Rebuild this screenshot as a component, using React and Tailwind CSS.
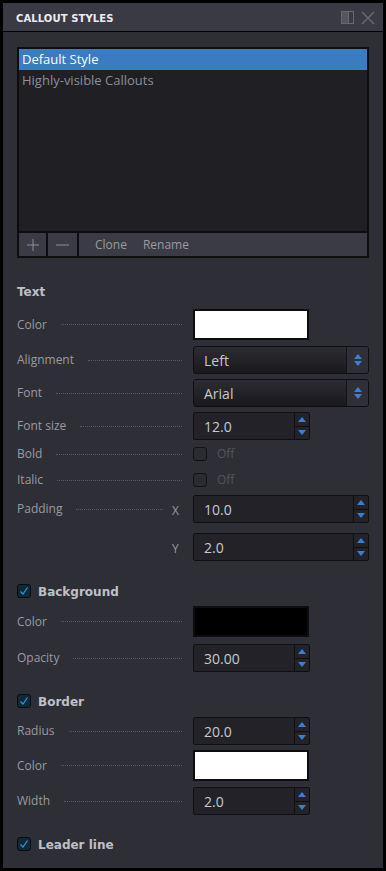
import React from "react";

const F = { fontFamily: '"Open Sans", "Noto Sans", sans-serif' };
const B = { fontFamily: '"DejaVu Sans", "Verdana", sans-serif' };

function Up() {
  return (
    <svg width="8" height="5" viewBox="0 0 8 5"><path d="M0 5 L4 0 L8 5 Z" fill="#3c7fd0" /></svg>
  );
}
function Down() {
  return (
    <svg width="8" height="5" viewBox="0 0 8 5"><path d="M0 0 L4 5 L8 0 Z" fill="#3c7fd0" /></svg>
  );
}

function Label({ text, dotsEnd = 0 }) {
  return (
    <div className="w-[165px] flex items-center shrink-0">
      <span className="text-[12px] text-[#9a9aa2] leading-none" style={F}>{text}</span>
      <div className="flex-1 ml-[14px] border-t border-dotted border-[#5a5a62]" style={{ marginRight: dotsEnd }} />
    </div>
  );
}

function Row({ children, className = "" }) {
  return <div className={"flex items-center pl-[14px] " + className}>{children}</div>;
}

function Swatch({ color }) {
  return <div className={"w-[116px] h-[31px] border-2 border-[#0d0d10] " + color} />;
}

function Select({ value }) {
  return (
    <div className="w-[176px] h-[28px] flex rounded-[3px] border border-[#0f0f12] overflow-hidden bg-gradient-to-b from-[#2c2c33] to-[#19191d]">
      <div className="flex-1 flex items-center pl-[10px] text-[14px] text-[#c8c8d0]" style={F}>{value}</div>
      <div className="w-[22px] border-l border-[#141417] bg-[#2e2f37] flex flex-col items-center justify-center gap-[2px]">
        <Up />
        <Down />
      </div>
    </div>
  );
}

function Spinner({ value, wide }) {
  return (
    <div className={(wide ? "w-[176px]" : "w-[117px]") + " h-[28px] flex rounded-[2px] border border-[#0f0f12] bg-[#222228]"}>
      <div className="flex-1 flex items-center pl-[10px] text-[14px] text-[#c8c8d0]" style={F}>{value}</div>
      <div className="w-[15px] border-l border-[#0f0f12] flex flex-col">
        <div className="flex-1 flex items-center justify-center border-b border-[#0f0f12]"><Up /></div>
        <div className="flex-1 flex items-center justify-center"><Down /></div>
      </div>
    </div>
  );
}

function Check({ checked }) {
  return checked ? (
    <div className="w-[14px] h-[14px] rounded-[3px] border border-[#0a0a0c] bg-[#0e2a3a] flex items-center justify-center">
      <svg width="10" height="10" viewBox="0 0 10 10"><path d="M1.5 5.5 L4 8 L8.5 1.5" fill="none" stroke="#3d8fd6" strokeWidth="1.2" /></svg>
    </div>
  ) : (
    <div className="w-[14px] h-[14px] rounded-[3px] border border-[#111114] bg-[#2a2a31]" />
  );
}

function Toggle() {
  return (
    <div className="flex items-center gap-[10px]">
      <Check />
      <span className="text-[12px] text-[#54545c] leading-none" style={F}>Off</span>
    </div>
  );
}

function Heading({ text, check, className = "" }) {
  return (
    <div className={"h-[20px] flex items-center pl-[14px] " + className}>
      {check && <div className="mr-[7px]"><Check checked /></div>}
      <span className="text-[12px] font-bold text-[#bfc0c8] leading-none mt-[1px]" style={B}>{text}</span>
    </div>
  );
}

const gap = "ml-[11px]";

export default function App() {
  return (
    <div className="w-[386px] h-[871px] border-[3px] border-black bg-[#2e2e36] flex flex-col overflow-hidden">
      <div className="h-[29px] shrink-0 bg-[#393a43] border-b border-black flex items-center pl-[13px] pr-[8px]">
        <span className="text-[10px] font-bold text-[#ececf0] tracking-[0.1px] mt-[2px]" style={B}>CALLOUT STYLES</span>
        <div className="flex-1" />
        <svg width="13" height="13" viewBox="0 0 13 13" className="mt-[1px]">
          <rect x="0.5" y="0.5" width="12" height="12" fill="none" stroke="#686870" />
          <rect x="0.5" y="0.5" width="7" height="12" fill="#55555d" stroke="#686870" />
        </svg>
        <svg width="14" height="14" viewBox="0 0 14 14" className="ml-[7px] mt-[1px]">
          <path d="M1 1 L13 13 M13 1 L1 13" stroke="#6e6e76" strokeWidth="1.3" />
        </svg>
      </div>

      <div className="mx-[14px] mt-[15px] border-2 border-[#0d0d10] flex flex-col shrink-0">
        <div className="h-[182px] bg-[#1f1f24] flex flex-col" style={F}>
          <div className="h-[21px] bg-[#3a7bc1] flex items-center pl-[3px] text-[13px] text-white">Default Style</div>
          <div className="h-[21px] flex items-center pl-[3px] text-[13px] text-[#8e8e96]">Highly-visible Callouts</div>
        </div>
        <div className="h-[25px] border-t-2 border-[#0d0d10] bg-[#3a3b44] flex" style={F}>
          <div className="w-[29px] flex items-center justify-center border-r-2 border-[#0d0d10]">
            <svg width="12" height="12" viewBox="0 0 12 12"><path d="M6 0 V12 M0 6 H12" stroke="#8e8e96" strokeWidth="1" /></svg>
          </div>
          <div className="w-[31px] flex items-center justify-center border-r-2 border-[#0d0d10]">
            <svg width="13" height="12" viewBox="0 0 13 12"><path d="M0 6 H13" stroke="#8e8e96" strokeWidth="1" /></svg>
          </div>
          <div className="flex items-center pl-[16px] gap-[16px] text-[12px] text-[#9a9aa2]">
            <span>Clone</span>
            <span>Rename</span>
          </div>
        </div>
      </div>

      <Heading text="Text" className="mt-[23px]" />
      <Row className="mt-[8px]"><Label text="Color" /><div className={gap}><Swatch color="bg-white" /></div></Row>
      <Row className="mt-[6px]"><Label text="Alignment" /><div className={gap}><Select value="Left" /></div></Row>
      <Row className="mt-[5px]"><Label text="Font" /><div className={gap}><Select value="Arial" /></div></Row>
      <Row className="mt-[5px]"><Label text="Font size" /><div className={gap}><Spinner value="12.0" /></div></Row>
      <Row className="mt-[4px] h-[20px]"><Label text="Bold" /><div className={gap}><Toggle /></div></Row>
      <Row className="mt-[6px] h-[20px]"><Label text="Italic" /><div className={gap}><Toggle /></div></Row>
      <Row className="mt-[5px]">
        <Label text="Padding" dotsEnd={19} />
        <div className={gap + " relative"}>
          <span className="absolute left-[-21px] top-[7px] text-[12px] text-[#9a9aa2]" style={F}>X</span>
          <Spinner value="10.0" wide />
        </div>
      </Row>
      <Row className="mt-[10px]">
        <div className="w-[165px] shrink-0" />
        <div className={gap + " relative"}>
          <span className="absolute left-[-21px] top-[7px] text-[12px] text-[#9a9aa2]" style={F}>Y</span>
          <Spinner value="2.0" wide />
        </div>
      </Row>

      <Heading text="Background" check className="mt-[20px]" />
      <Row className="mt-[5px]"><Label text="Color" /><div className={gap}><Swatch color="bg-black" /></div></Row>
      <Row className="mt-[7px]"><Label text="Opacity" /><div className={gap}><Spinner value="30.00" /></div></Row>

      <Heading text="Border" check className="mt-[19px]" />
      <Row className="mt-[6px]"><Label text="Radius" /><div className={gap}><Spinner value="20.0" /></div></Row>
      <Row className="mt-[5px]"><Label text="Color" /><div className={gap}><Swatch color="bg-white" /></div></Row>
      <Row className="mt-[6px]"><Label text="Width" /><div className={gap}><Spinner value="2.0" /></div></Row>

      <Heading text="Leader line" check className="mt-[19px]" />
    </div>
  );
}
